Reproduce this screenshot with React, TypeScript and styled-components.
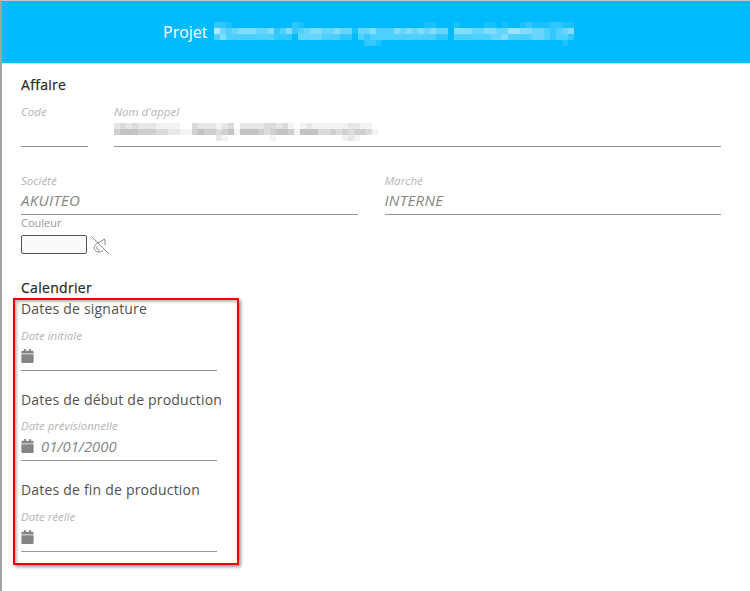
import React from 'react';
import styled, { createGlobalStyle } from 'styled-components';
import { FaCalendar } from 'react-icons/fa';

const GlobalStyle = createGlobalStyle`
  html, body {
    margin: 0;
    padding: 0;
    background: #fff;
  }
  body {
    font-family: "Open Sans", "Liberation Sans", sans-serif;
  }
`;

const Frame = styled.div`
  position: relative;
  width: 750px;
  height: 591px;
  box-sizing: border-box;
  overflow: hidden;
  background: #fff;
  border-top: 1px solid #c6c6c6;
  border-left: 2px solid #a3a3a3;
`;

const EdgeMark = styled.div<{ $top: number; $height: number; $color: string }>`
  position: absolute;
  left: -2px;
  width: 2px;
  top: ${(p) => p.$top}px;
  height: ${(p) => p.$height}px;
  background: ${(p) => p.$color};
`;

const Header = styled.header`
  display: flex;
  align-items: flex-start;
  height: 62px;
  box-sizing: content-box;
  padding-left: 161px;
  background: #00baff;
  border-bottom: 1px solid #bfeeff;
`;

const HeaderTitle = styled.h1`
  margin: 20px 0 0;
  font-size: 16px;
  line-height: 22px;
  font-weight: 400;
  color: #fff;
`;

const HeaderMosaic = styled.div`
  margin: 21px 0 0 0;
`;

const Body = styled.main`
  padding: 11px 29px 0 19px;
`;

const SectionTitle = styled.h2<{ $top?: number }>`
  margin: ${(p) => p.$top ?? 0}px 0 0;
  font-size: 14px;
  line-height: 20px;
  font-weight: 400;
  letter-spacing: 0.3px;
  color: #2b2b2b;
  -webkit-text-stroke: 0.25px #2b2b2b;
`;

const Row = styled.div<{ $top: number; $gap: number }>`
  display: flex;
  gap: ${(p) => p.$gap}px;
  margin-top: ${(p) => p.$top}px;
`;

const Field = styled.div<{ $width?: number }>`
  flex: ${(p) => (p.$width ? `0 0 ${p.$width}px` : '1 1 0')};
  min-width: 0;
`;

const Label = styled.div<{ $top?: number }>`
  margin-top: ${(p) => p.$top ?? 0}px;
  font-size: 11.5px;
  line-height: 14px;
  font-style: italic;
  color: #b4b4b4;
  white-space: nowrap;
`;

const Value = styled.div<{ $height: number }>`
  display: flex;
  align-items: center;
  gap: 8px;
  height: ${(p) => p.$height - 2}px;
  padding-bottom: 2px;
  font-size: 15px;
  letter-spacing: 0.3px;
  font-style: italic;
  color: #858585;
  border-bottom: 1px solid #969696;
`;

const ColorLabel = styled.div`
  margin-top: 1px;
  font-size: 11px;
  line-height: 14px;
  color: #999;
`;

const ColorRow = styled.div`
  display: flex;
  align-items: center;
  gap: 4px;
  margin-top: 5px;
`;

const Swatch = styled.div`
  width: 66px;
  height: 19px;
  box-sizing: border-box;
  border: 1px solid #555;
  border-radius: 2px;
  background: #fafafa;
`;

const DateGroup = styled.section<{ $top?: number }>`
  width: 196px;
  margin-top: ${(p) => p.$top ?? 0}px;
`;

const DateTitle = styled.h3`
  margin: 0;
  font-size: 14px;
  line-height: 20px;
  font-weight: 400;
  letter-spacing: 0.2px;
  color: #505050;
  white-space: nowrap;
`;

const CalendarIcon = styled(FaCalendar)`
  flex: none;
  width: 13px;
  height: 14px;
  color: #858585;
`;

const DateValue = styled(Value)`
  align-items: flex-start;
  gap: 7px;
  height: 28px;
  padding: 6px 0 0;
  box-sizing: border-box;
  font-size: 14.8px;
  letter-spacing: 0;
  line-height: 14px;
`;

const Highlight = styled.div`
  position: absolute;
  left: 11px;
  top: 297px;
  width: 226px;
  height: 267px;
  box-sizing: border-box;
  border: 2px solid #f00000;
  box-shadow: 2px 2px 3px rgba(0, 0, 0, 0.4), inset 2px 2px 3px rgba(0, 0, 0, 0.28);
  pointer-events: none;
`;

type MosaicProps = { rows: string[]; cell: number; color: string };

// le texte flouté de la capture : chaque chiffre est l'opacité d'un carré
function Mosaic({ rows, cell, color }: MosaicProps) {
  const cols = Math.max(...rows.map((r) => r.length));
  return (
    <svg width={cols * cell} height={rows.length * cell} style={{ display: 'block' }}>
      {rows.map((row, y) =>
        row.split('').map((d, x) => (
          <rect
            key={`${x}-${y}`}
            x={x * cell}
            y={y * cell}
            width={cell}
            height={cell}
            fill={color}
            fillOpacity={Number(d) / 10}
          />
        )),
      )}
    </svg>
  );
}

const titleBlur = [
  '0221000000000021000000000000000000001100010000110100121112211',
  '0743455544523523455445441445333545454544055544554466554432345',
  '0353333333322204444333220323333333333322033333344533334432332',
  '0000000000000000000000000022100000000000000000000000000000010',
];

const nameBlur = [
  '23232221111003222123022223323101211111122110',
  '45554443322114544345155543455415553343434431',
  '00000000000000000210000000100000000000121000',
];

function DropletOff() {
  return (
    <svg width="18" height="18" viewBox="0 0 18 18" fill="none" stroke="#888" strokeWidth="1">
      <path d="M.5 .5 17.5 17.5" />
      <path d="M13.5 3C11 5.5 5 6.5 3.5 10c-1.4 3.2 1.2 6 4.5 6 1.6 0 3-.6 4-1.6" />
      <path d="M6 10.5c-.8 2 .5 3.5 2.5 3.5" />
      <path d="M13.5 3c.5 2 .8 3.8.6 6" />
    </svg>
  );
}

export default function App() {
  return (
    <Frame>
      <GlobalStyle />
      <EdgeMark $top={111} $height={5} $color="#b8925a" />
      <EdgeMark $top={254} $height={36} $color="#3b56a5" />
      <Header>
        <HeaderTitle>Projet</HeaderTitle>
        <HeaderMosaic>
          <Mosaic rows={titleBlur} cell={6} color="#fff" />
        </HeaderMosaic>
      </Header>
      <Body>
        <SectionTitle>Affaire</SectionTitle>
        <Row $top={10} $gap={26}>
          <Field $width={67}>
            <Label>Code</Label>
            <Value $height={27} />
          </Field>
          <Field>
            <Label>Nom d'appel</Label>
            <Value $height={27}>
              <Mosaic rows={nameBlur} cell={6} color="#888" />
            </Value>
          </Field>
        </Row>
        <Row $top={27} $gap={27}>
          <Field>
            <Label>Société</Label>
            <Value $height={26}>AKUITEO</Value>
          </Field>
          <Field>
            <Label>Marché</Label>
            <Value $height={26}>INTERNE</Value>
          </Field>
        </Row>
        <ColorLabel>Couleur</ColorLabel>
        <ColorRow>
          <Swatch />
          <DropletOff />
        </ColorRow>
        <SectionTitle $top={24}>Calendrier</SectionTitle>
        <DateGroup $top={1}>
          <DateTitle>Dates de signature</DateTitle>
          <Label $top={10}>Date initiale</Label>
          <DateValue $height={28}>
            <CalendarIcon />
          </DateValue>
        </DateGroup>
        <DateGroup $top={19}>
          <DateTitle>Dates de début de production</DateTitle>
          <Label $top={9}>Date prévisionnelle</Label>
          <DateValue $height={28}>
            <CalendarIcon />
            01/01/2000
          </DateValue>
        </DateGroup>
        <DateGroup $top={19}>
          <DateTitle>Dates de fin de production</DateTitle>
          <Label $top={10}>Date réelle</Label>
          <DateValue $height={28}>
            <CalendarIcon />
          </DateValue>
        </DateGroup>
      </Body>
      <Highlight />
    </Frame>
  );
}
